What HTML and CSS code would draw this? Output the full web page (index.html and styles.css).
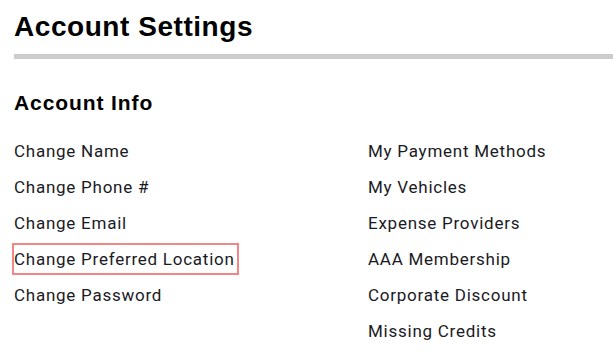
FILE: index.html
```html
<!DOCTYPE html>
<html lang="en">
<head>
<meta charset="utf-8">
<title>Account Settings</title>
<link rel="stylesheet" href="styles.css">
</head>
<body>
<main class="page">
  <h1 class="title">Account Settings</h1>
  <hr class="rule">
  <h2 class="section-title">Account Info</h2>
  <div class="columns">
    <ul class="links">
      <li><a href="#">Change Name</a></li>
      <li><a href="#">Change Phone #</a></li>
      <li><a href="#">Change Email</a></li>
      <li><a href="#" class="focused">Change Preferred Location</a></li>
      <li><a href="#">Change Password</a></li>
    </ul>
    <ul class="links">
      <li><a href="#">My Payment Methods</a></li>
      <li><a href="#">My Vehicles</a></li>
      <li><a href="#">Expense Providers</a></li>
      <li><a href="#">AAA Membership</a></li>
      <li><a href="#">Corporate Discount</a></li>
      <li><a href="#">Missing Credits</a></li>
    </ul>
  </div>
</main>
</body>
</html>
```
FILE: styles.css
```css
html, body {
  margin: 0;
  padding: 0;
  background: #ffffff;
}
.page {
  padding: 11px 0 0 14px;
}
.title {
  margin: 0;
  font-family: "Liberation Sans", Arial, sans-serif;
  font-weight: bold;
  font-size: 28px;
  line-height: 32px;
  color: #000;
  letter-spacing: 0.55px;
}
.rule {
  margin: 11px 0 0 0;
  border: 0;
  height: 5px;
  background: #cccccc;
}
.section-title {
  margin: 32px 0 0 0;
  font-family: "Liberation Sans", Arial, sans-serif;
  font-weight: bold;
  font-size: 21px;
  line-height: 24px;
  color: #000;
  letter-spacing: 0.9px;
}
.columns {
  display: grid;
  grid-template-columns: 354px 1fr;
  margin-top: 18px;
}
.links {
  list-style: none;
  margin: 0;
  padding: 0;
}
.links li {
  height: 36px;
  display: flex;
  align-items: center;
}
.links a {
  font-family: Roboto, "Liberation Sans", sans-serif;
  font-size: 17px;
  line-height: 30px;
  color: #1a1a24;
  text-decoration: none;
  letter-spacing: 0.75px;
}
.links a.focused {
  border: 2px solid #f28585;
  line-height: 28px;
  padding: 0 2px 0 0;
  margin-left: -2px;
}
```
